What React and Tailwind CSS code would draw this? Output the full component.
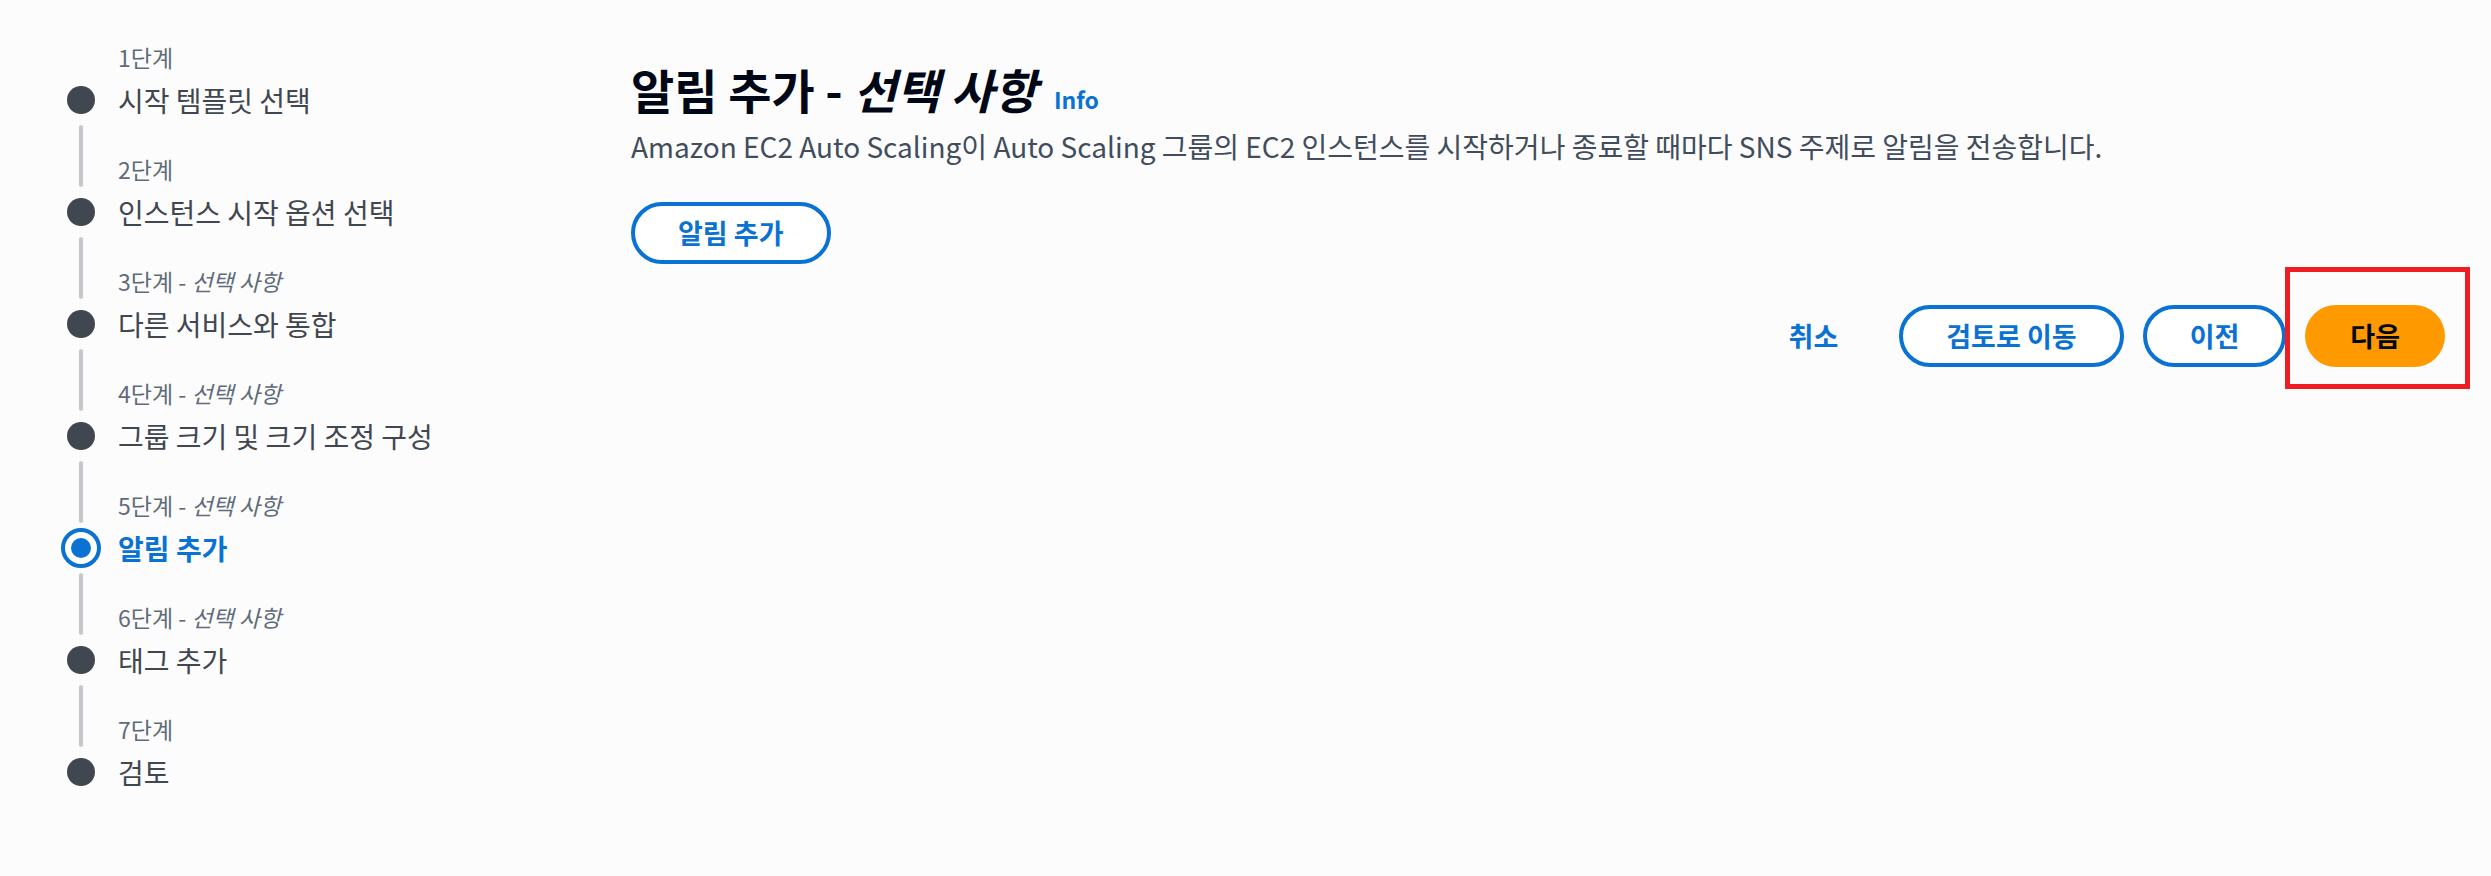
import React from "react";

const steps = [
  { num: "1단계", title: "시작 템플릿 선택" },
  { num: "2단계", title: "인스턴스 시작 옵션 선택" },
  { num: "3단계", optional: true, title: "다른 서비스와 통합" },
  { num: "4단계", optional: true, title: "그룹 크기 및 크기 조정 구성" },
  { num: "5단계", optional: true, title: "알림 추가", active: true },
  { num: "6단계", optional: true, title: "태그 추가" },
  { num: "7단계", title: "검토" },
];

function StepNav() {
  return (
    <nav className="w-[631px] shrink-0 pl-[67px] pt-[8px]">
      <ul>
        {steps.map((step, i) => (
          <li key={step.num}>
            <div className="flex h-[72px]">
              <div className="flex w-[28px] justify-center py-[5px]">
                {i > 0 ? <span className="w-[4px] rounded-full bg-[#c6c6cd]" /> : null}
              </div>
              <p className="ml-[23px] self-end pb-[8px] text-[23px] leading-[30px] text-[#5f6b7a]">
                {step.num}
                {step.optional ? (
                  <>
                    {" - "}
                    <i>선택 사항</i>
                  </>
                ) : null}
              </p>
            </div>
            <div className="flex h-[40px] items-center">
              <div className="flex w-[28px] justify-center">
                {step.active ? (
                  <span className="grid h-[40px] w-[40px] shrink-0 place-items-center rounded-full border-[4px] border-[#0972d3] bg-white">
                    <span className="h-[20px] w-[20px] rounded-full bg-[#0972d3]" />
                  </span>
                ) : (
                  <span className="h-[28px] w-[28px] shrink-0 rounded-full bg-[#414750]" />
                )}
              </div>
              <p
                className={
                  step.active
                    ? "ml-[23px] text-[28px] font-bold leading-[40px] text-[#0972d3]"
                    : "ml-[23px] text-[28px] leading-[40px] text-[#414750]"
                }
              >
                {step.title}
              </p>
            </div>
          </li>
        ))}
      </ul>
    </nav>
  );
}

function OutlineButton({ children }) {
  return (
    <button
      type="button"
      className="h-[62px] rounded-full border-[4px] border-[#0972d3] bg-white px-[43px] text-[27px] font-bold text-[#0972d3]"
    >
      {children}
    </button>
  );
}

export default function App() {
  return (
    <div
      className="flex min-h-[876px] w-full bg-[#fcfcfc]"
      style={{ fontFamily: '"Noto Sans CJK KR", "Noto Sans", sans-serif' }}
    >
      <StepNav />

      <main className="flex-1 pr-[46px] pt-[61px]">
        <div className="flex items-baseline gap-[17px]">
          <h1 className="text-[47px] font-bold leading-[56px] text-[#000716]">
            알림 추가 - <i>선택 사항</i>
          </h1>
          <a className="text-[23px] font-bold text-[#0972d3]">Info</a>
        </div>
        <p className="mt-[11px] text-[28px] leading-[36px] text-[#414d5c]">
          Amazon EC2 Auto Scaling이 Auto Scaling 그룹의 EC2 인스턴스를 시작하거나 종료할 때마다 SNS 주제로 알림을 전송합니다.
        </p>

        <div className="mt-[38px]">
          <OutlineButton>알림 추가</OutlineButton>
        </div>

        <div className="mt-[41px] flex items-center justify-end gap-[19px]">
          <button
            type="button"
            className="h-[62px] px-[42px] text-[27px] font-bold text-[#0972d3]"
          >
            취소
          </button>
          <OutlineButton>검토로 이동</OutlineButton>
          <OutlineButton>이전</OutlineButton>
          <div className="relative">
            <button
              type="button"
              className="h-[62px] rounded-full border-[4px] border-transparent bg-[#ff9900] px-[41px] text-[27px] font-bold text-[#000716]"
            >
              다음
            </button>
            <div className="pointer-events-none absolute -top-[38px] -bottom-[22px] -left-[20px] -right-[25px] border-[5px] border-[#ee1d23]" />
          </div>
        </div>
      </main>
    </div>
  );
}
